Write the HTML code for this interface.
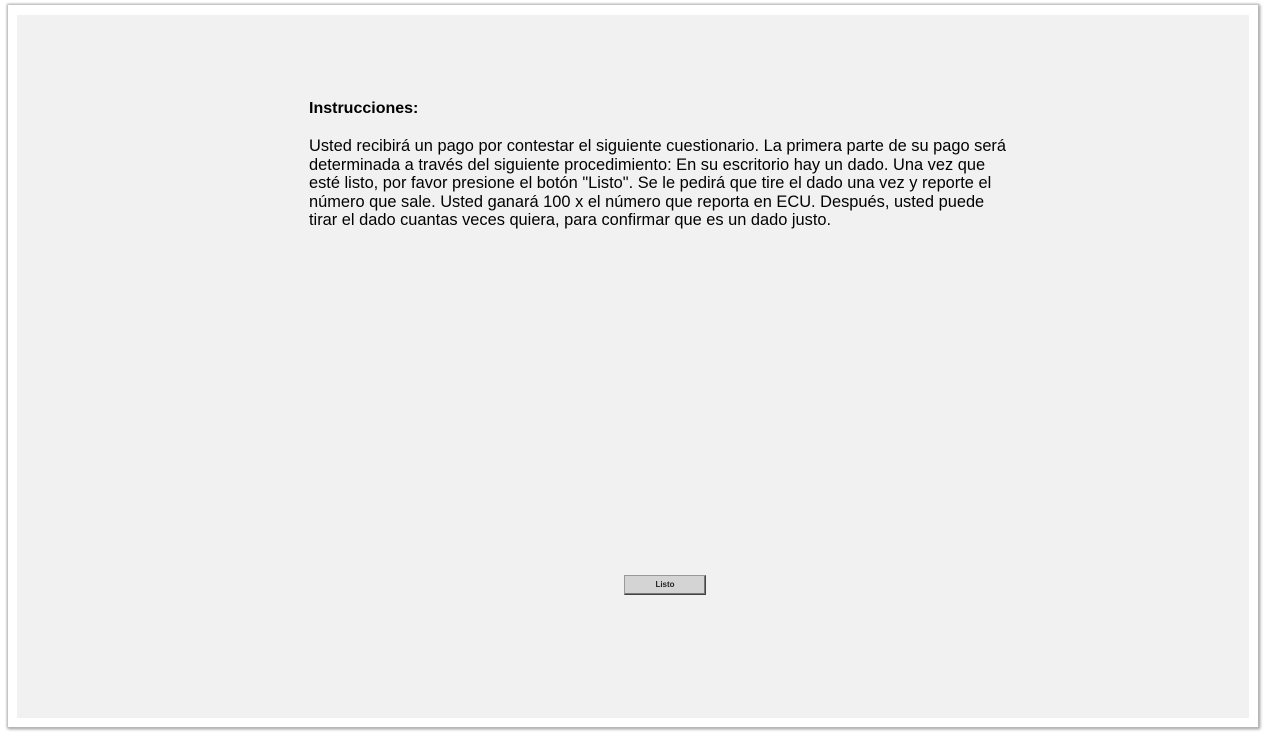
<!DOCTYPE html>
<html><head><meta charset="utf-8"><style>
html,body{margin:0;padding:0;width:1266px;height:737px;background:#fff;overflow:hidden;font-family:"Liberation Sans",Arial,sans-serif;}
.frame{position:absolute;left:8px;top:5px;width:1250px;height:722px;background:#fff;box-shadow:0 0 2px 1px #bbb,1px 1px 3px 1px #999;}
.inner{position:absolute;left:17px;top:15px;width:1232px;height:703px;background:#f1f1f1;}
.t{position:absolute;left:309px;color:#000;font-size:16.4px;line-height:18.5px;white-space:nowrap;}
.btn{position:absolute;left:624px;top:575px;width:80px;height:18px;background:#d4d4d4;border:1px solid #444;border-top-color:#999;border-left-color:#999;box-shadow:inset -1px -1px 0 #777;font-size:8px;font-weight:bold;text-align:center;line-height:18px;color:#222;}
</style></head><body>
<div class="frame"></div>
<div class="inner"></div>
<div class="t" style="top:100px;font-weight:bold;font-size:16px">Instrucciones:</div>
<div class="t" style="top:137px">Usted recibirá un pago por contestar el siguiente cuestionario. La primera parte de su pago será<br>determinada a través del siguiente procedimiento: En su escritorio hay un dado. Una vez que<br>esté listo, por favor presione el botón "Listo". Se le pedirá que tire el dado una vez y reporte el<br>número que sale. Usted ganará 100 x el número que reporta en ECU. Después, usted puede<br>tirar el dado cuantas veces quiera, para confirmar que es un dado justo.</div>
<div class="btn">Listo</div>
</body></html>
